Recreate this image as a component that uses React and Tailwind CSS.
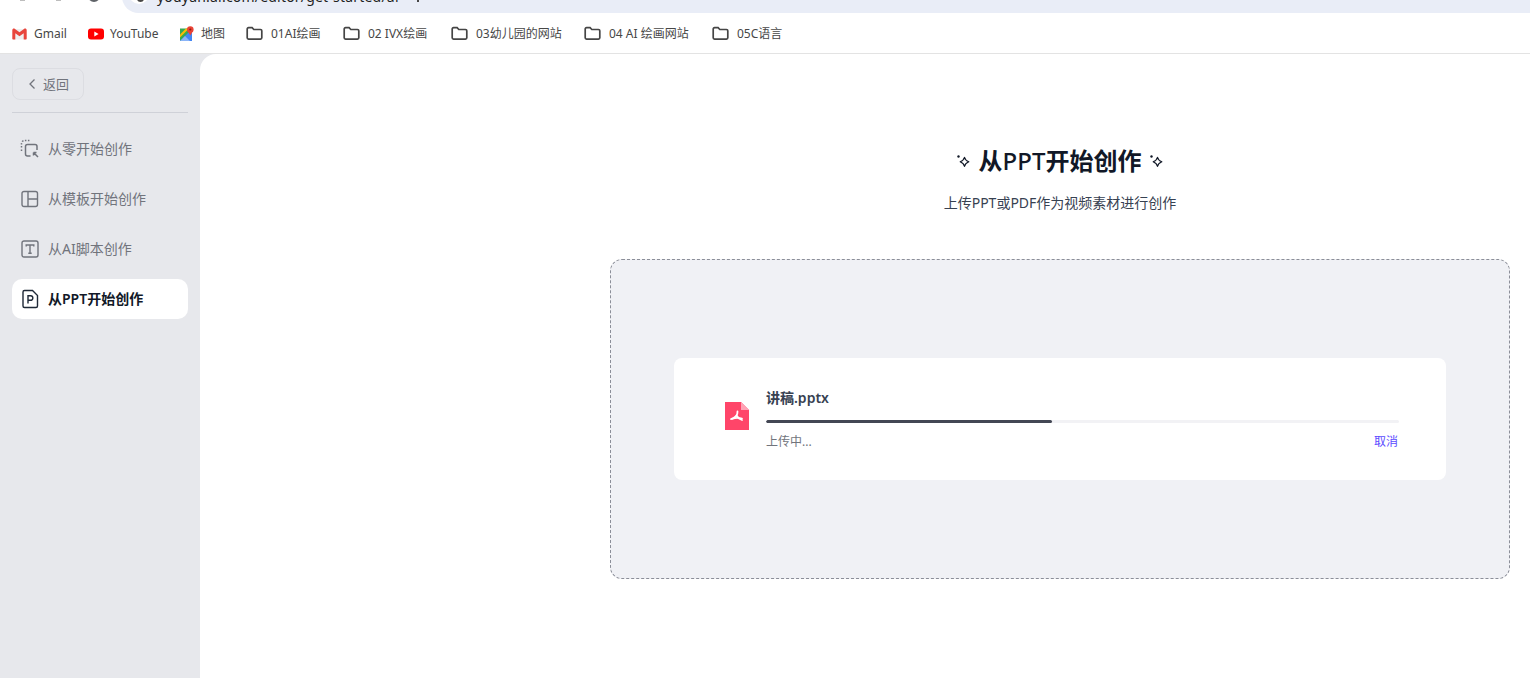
function Folder() {
  return (
    <svg width="17" height="15" viewBox="0 0 17 15" fill="none" stroke="#454545" strokeWidth="1.7" className="shrink-0">
      <path d="M1.2 3a1.3 1.3 0 0 1 1.3-1.3h3.6l1.7 1.8h6.7a1.3 1.3 0 0 1 1.3 1.3v7a1.3 1.3 0 0 1-1.3 1.3h-12a1.3 1.3 0 0 1-1.3-1.3z" />
    </svg>
  );
}
function Bookmark({ icon, label, className }) {
  return (
    <div className={"flex items-center " + className}>
      {icon}
      <span className="text-[12px] leading-none text-[#474747] whitespace-nowrap font-['Noto_Sans','Noto_Sans_CJK_SC',sans-serif]">{label}</span>
    </div>
  );
}
function Spark() {
  return (
    <svg width="15" height="15" viewBox="0 0 15 15" fill="none" stroke="#111827" strokeWidth="1.200">
      <path d="M8.500 3.300C9 5.400 10 6.600 12.800 7.800 10 9 9 10.200 8.500 12.300 8 10.200 7 9 4.200 7.800 7 6.600 8 5.400 8.500 3.300z" strokeLinejoin="round" />
      <circle cx="2.500" cy="2.500" r="1.200" fill="#111827" stroke="none" />
    </svg>
  );
}
function NavItem({ icon, label, active }) {
  return (
    <div className={"h-10 rounded-[10px] flex items-center pl-2 gap-2 " + (active ? "bg-white text-[#111827] font-semibold" : "text-[#71747c]")}>
      <span className="w-5 h-5 flex items-center justify-center shrink-0">{icon}</span>
      <span className="text-[14px] leading-none">{label}</span>
    </div>
  );
}
export default function App() {
  return (
    <div className="w-[1530px] h-[678px] overflow-hidden flex flex-col bg-white font-['Noto_Sans','Noto_Sans_CJK_SC',sans-serif]">
      <div className="h-[13px] shrink-0 bg-white relative overflow-hidden">
        <div className="absolute left-[122px] right-0 -top-[20px] h-[33px] rounded-l-full bg-[#e9edf7]" />
        <div className="absolute left-[129px] -top-[16px] w-5 h-5 rounded-full bg-white" />
        <div className="absolute left-[137px] -top-[5px] w-[7px] h-[7px] rounded-full bg-[#474747]" />
        <div className="absolute left-[88px] -top-[10px] w-3 h-3 rounded-full border-2 border-[#5f6368]" />
        <div className="absolute left-[20px] -top-[1px] w-[5px] h-[2px] bg-[#bdbdbd]" />
        <div className="absolute left-[56px] -top-[1px] w-[5px] h-[2px] bg-[#bdbdbd]" />
        <div className="absolute left-[157px] -top-[13px] text-[14px] leading-[20px] tracking-[0.2px] text-[#1f1f1f] whitespace-nowrap">youyan.ai.com/editor/get-started/ai</div>
        <div className="absolute left-[417px] -top-[3px] w-[2px] h-[5px] bg-[#474747]" />
      </div>
      <div className="h-[41px] shrink-0 border-b border-[#e3e3e3] flex items-center pl-3 pt-[1px]">
        <Bookmark className="gap-[7px] w-[76px]" label="Gmail" icon={
          <svg width="15" height="12" viewBox="0 0 15 12">
            <path d="M1 1h13v10.500H1z" fill="#efefef" />
            <path d="M.3 2.200C.3.700 1.900.200 3 1l4.500 3.300L12 1c1.100-.8 2.700-.3 2.700 1.200v8.300c0 .7-.4 1.100-1 1.100h-2V5.200L7.500 8.300 3.300 5.200v6.400h-2c-.6 0-1-.4-1-1.100z" fill="#e8453c" />
          </svg>
        } />
        <Bookmark className="gap-[6px] w-[92px]" label="YouTube" icon={
          <svg width="16" height="12" viewBox="0 0 16 12">
            <rect y=".5" width="16" height="11" rx="3" fill="#ff0000" />
            <path d="M6.300 3.500v5l4.300-2.500z" fill="#fff" />
          </svg>
        } />
        <Bookmark className="gap-[7px] w-[66px]" label="地图" icon={
          <svg width="14" height="16" viewBox="0 0 14 16">
            <rect y="2.500" width="12" height="12.500" fill="#34a853" />
            <path d="M0 15 12 3v12z" fill="#4285f4" />
            <path d="M0 15l5-5 5 5z" fill="#8ab4f8" />
            <path d="M0 8.500 6 2.500h3L0 11.500z" fill="#fbbc04" />
            <circle cx="10.300" cy="3.500" r="3.300" fill="#ea4335" />
            <path d="M7.500 5 10.300 9.500 13 5z" fill="#ea4335" />
            <circle cx="10.300" cy="3.500" r="1.100" fill="#8e1a12" />
          </svg>
        } />
        <Bookmark className="gap-2 w-[97px]" label="01AI绘画" icon={<Folder />} />
        <Bookmark className="gap-2 w-[108px]" label="02 IVX绘画" icon={<Folder />} />
        <Bookmark className="gap-2 w-[133px]" label="03幼儿园的网站" icon={<Folder />} />
        <Bookmark className="gap-2 w-[128px]" label="04 AI 绘画网站" icon={<Folder />} />
        <Bookmark className="gap-2" label="05C语言" icon={<Folder />} />
      </div>
      <div className="flex-1 flex bg-[#e7e8ec] min-h-0">
        <aside className="w-[200px] shrink-0 px-3 pt-[14px]">
          <div className="border-b border-[#cfd1d8] pb-3">
            <div className="w-[72px] h-8 rounded-lg border border-[#dcdde2] flex items-center pl-[15px] gap-[7px] text-[#71747c]">
              <svg width="8" height="12" viewBox="0 0 8 12" fill="none" stroke="#71747c" strokeWidth="1.300"><path d="M6.500 1.500 2 6l4.500 4.500" /></svg>
              <span className="text-[13px] leading-none">返回</span>
            </div>
          </div>
          <div className="mt-4 flex flex-col gap-[10px]">
            <NavItem label="从零开始创作" icon={
              <svg width="20" height="20" viewBox="0 0 20 20" fill="none" stroke="#71747c" strokeWidth="1.500">
                <path d="M1.500 8.500V4.500a3 3 0 0 1 3-3h6" strokeDasharray="1.500 1.500" />
                <path d="M1.500 10.500v2" strokeDasharray="1.500 1.500" />
                <path d="M10.500 17H7.500a2 2 0 0 1-2-2V7.500a2 2 0 0 1 2-2H15a2 2 0 0 1 2 2V11" />
                <path d="m13.500 13.500 4.500 4.500M13.500 13.500h3M13.500 13.500v3" />
              </svg>
            } />
            <NavItem label="从模板开始创作" icon={
              <svg width="18" height="18" viewBox="0 0 18 18" fill="none" stroke="#71747c" strokeWidth="1.400">
                <rect x="1" y="1.500" width="15.500" height="15" rx="2" />
                <path d="M7 1.500v15M7 9h9.500" />
              </svg>
            } />
            <NavItem label="从AI脚本创作" icon={
              <svg width="18" height="18" viewBox="0 0 18 18" fill="none" stroke="#71747c" strokeWidth="1.400">
                <rect x="1" y="1" width="16" height="16" rx="2" />
                <path d="M5.200 6.500V5h7.600v1.500M9 5v8.200M7.300 13.200h3.400" />
              </svg>
            } />
            <NavItem active label="从PPT开始创作" icon={
              <svg width="18" height="20" viewBox="0 0 18 20" fill="none" stroke="#1f2937" strokeWidth="1.400">
                <path d="M11.500 1.500H3.500a1.500 1.500 0 0 0-1.500 1.500v14a1.500 1.500 0 0 0 1.500 1.500h11.500a1.500 1.500 0 0 0 1.500-1.500V6.500z" />
                <path d="M7 14.500V6.800h2.600a2.200 2.200 0 0 1 0 4.500H7" />
              </svg>
            } />
          </div>
        </aside>
        <main className="flex-1 bg-white rounded-tl-[16px] flex justify-end pr-5 min-w-0">
          <div className="w-[900px] flex flex-col items-center">
            <div className="mt-[91px] flex items-center gap-2 h-8">
              <Spark />
              <h1 className="text-[24px] leading-8 font-semibold text-[#111827]">从<span className="font-medium">PPT</span>开始创作</h1>
              <Spark />
            </div>
            <p className="mt-4 text-[14px] leading-5 text-[#374151]">上传PPT或PDF作为视频素材进行创作</p>
            <div className="mt-[46px] w-full h-[320px] pb-[1px] rounded-[12px] border border-dashed border-[#8b8e98] bg-[#f0f1f5] flex items-center justify-center">
              <div className="w-[772px] h-[122px] bg-white rounded-lg flex items-center pl-[51px] pr-[47px]">
                <svg width="24" height="28" viewBox="0 0 24 28" className="shrink-0 mt-[-5px]">
                  <path d="M0 0h16l8 8v20H0z" fill="#ff4569" />
                  <path d="M16 0l8 8h-8z" fill="#ffa3b5" />
                  <g fill="none" stroke="#fff" strokeWidth="1.800" strokeLinecap="round" strokeLinejoin="round">
                    <path d="M12.500 9.500c.2 3-1.500 6-6.500 7.500" />
                    <path d="M11.500 13.500c1 1.800 2.500 3.500 5.500 4.500" />
                    <path d="M7 17c3-1.200 6-1.500 10-.5" />
                  </g>
                </svg>
                <div className="flex-1 ml-[17px] min-w-0 pt-[3px]">
                  <div className="text-[14px] leading-5 font-semibold text-[#374151]">讲稿.pptx</div>
                  <div className="mt-3 h-[3px] rounded-full bg-[#f2f2f5] overflow-hidden">
                    <div className="h-full w-[45.2%] rounded-full bg-[#434754]" />
                  </div>
                  <div className="mt-[9px] pr-[1px] flex justify-between items-center text-[12px] leading-5">
                    <span className="text-[#71747c]">上传中...</span>
                    <span className="text-[#5b4bff]">取消</span>
                  </div>
                </div>
              </div>
            </div>
          </div>
        </main>
      </div>
    </div>
  );
}
